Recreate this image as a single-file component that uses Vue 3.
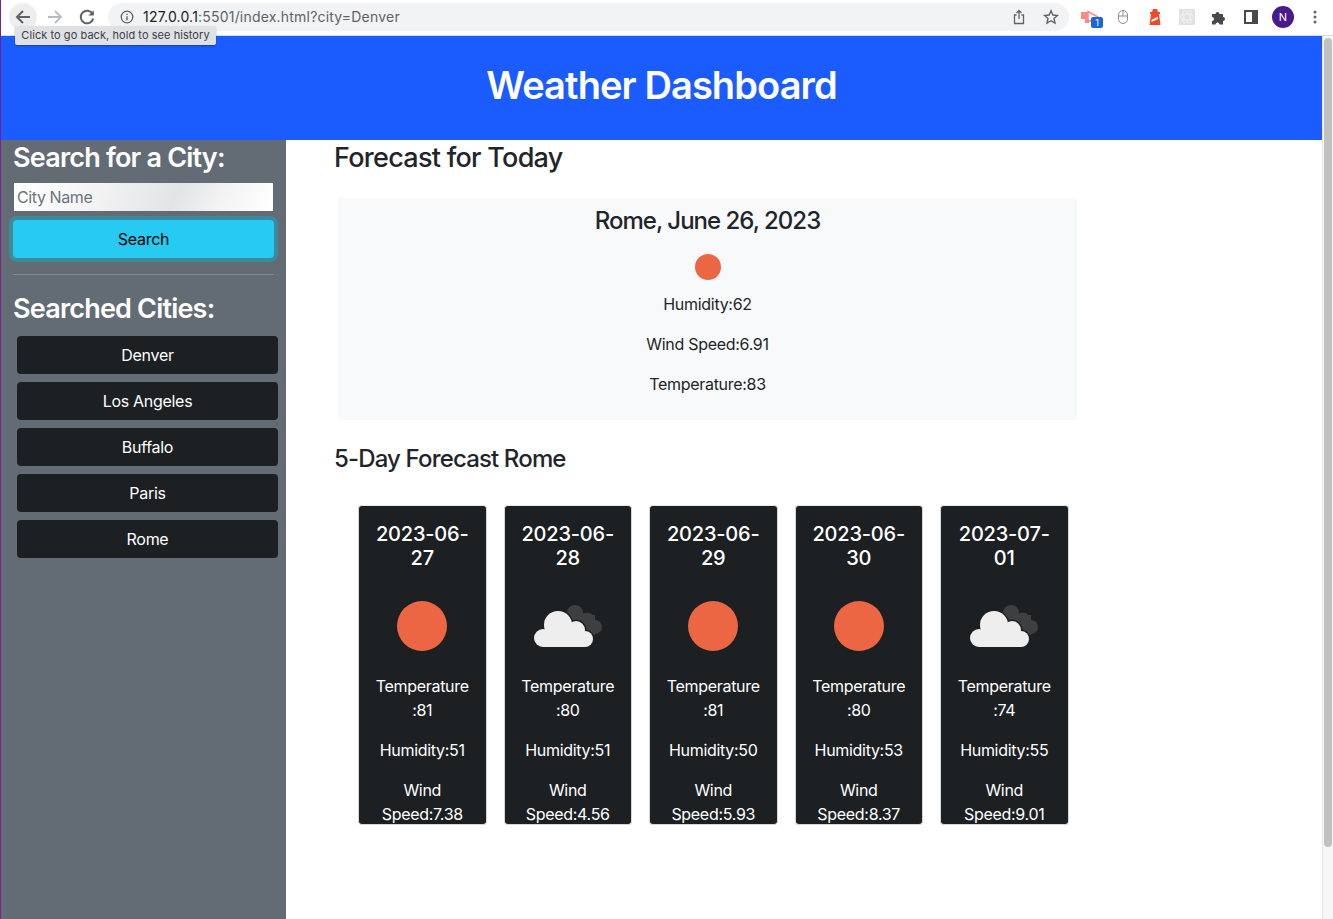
<script setup>
const cities = ['Denver', 'Los Angeles', 'Buffalo', 'Paris', 'Rome']
const days = [
  { date: '2023-06-27', icon: 'sun', temp: 81, hum: 51, wind: '7.38' },
  { date: '2023-06-28', icon: 'cloud', temp: 80, hum: 51, wind: '4.56' },
  { date: '2023-06-29', icon: 'sun', temp: 81, hum: 50, wind: '5.93' },
  { date: '2023-06-30', icon: 'sun', temp: 80, hum: 53, wind: '8.37' },
  { date: '2023-07-01', icon: 'cloud', temp: 74, hum: 55, wind: '9.01' },
]
</script>

<template>
  <div class="window">
    <div class="edge"></div>
    <div class="chrome">
      <div class="nav-btn back">
        <svg width="18" height="18" viewBox="0 0 18 18"><path d="M16 9H3.500M9 3 3 9l6 6" fill="none" stroke="#5f6368" stroke-width="2"/></svg>
      </div>
      <div class="nav-btn">
        <svg width="18" height="18" viewBox="0 0 18 18"><path d="M2 9h12.500M9 3l6 6-6 6" fill="none" stroke="#b9bbbe" stroke-width="1.800"/></svg>
      </div>
      <div class="nav-btn">
        <svg width="18" height="18" viewBox="0 0 18 18"><path d="M14.600 6A6.300 6.300 0 1 0 15.200 10.500" fill="none" stroke="#5f6368" stroke-width="2"/><path d="M15.800 2.200v5.400h-5.400z" fill="#5f6368"/></svg>
      </div>
      <div class="omnibox">
        <svg class="info" width="14" height="14" viewBox="0 0 14 14"><circle cx="7" cy="7" r="5.800" fill="none" stroke="#5f6368" stroke-width="1.300"/><path d="M7 6.200v4M7 3.700v1.300" stroke="#5f6368" stroke-width="1.400"/></svg>
        <span class="url"><b>127.0.0.1</b>:5501/index.html?city=Denver</span>
        <span class="spacer"></span>
        <svg width="16" height="16" viewBox="0 0 16 16"><path d="M5.500 6H3.500v8.500h9V6h-2M8 10V1.500M5.500 4 8 1.500 10.500 4" fill="none" stroke="#5f6368" stroke-width="1.300"/></svg>
        <svg class="star" width="16" height="16" viewBox="0 0 16 16"><path d="m8 1.800 1.900 4.200 4.500.5-3.400 3 1 4.500L8 11.700 4 14l1-4.500-3.400-3 4.500-.5z" fill="none" stroke="#5f6368" stroke-width="1.400"/></svg>
      </div>
      <div class="extensions">
        <div class="slot">
          <div class="ext-a">
            <svg width="20" height="18" viewBox="0 0 20 18"><path d="M7 3.500l10 5.500-10 5z" fill="none" stroke="#f98a8a" stroke-width="1.500"/><rect x="0" y="4" width="7" height="7" fill="#f98a8a"/><rect x="4" y="11" width="4" height="4" fill="#f98a8a"/></svg>
            <span class="badge">1</span>
          </div>
        </div>
        <div class="slot">
          <svg width="12" height="16" viewBox="0 0 12 16"><rect x="1.500" y="1.500" width="9" height="13" rx="4.500" fill="none" stroke="#8c8f93" stroke-width="1"/><path d="M1.500 7h9M6 1.500V7" stroke="#8c8f93" stroke-width="1"/></svg>
        </div>
        <div class="slot">
          <svg width="14" height="18" viewBox="0 0 14 18"><path d="M5 1h4l1 3h2v2h-1l1.500 11H1.500L3 6H2V4h2z" fill="#ef4a23"/><path d="M3.500 12 10 8.500V11l-6.500 3z" fill="#fff"/></svg>
        </div>
        <div class="slot">
          <div class="react">
            <svg width="16" height="16" viewBox="0 0 16 16"><g fill="none" stroke="#f4f4f4" stroke-width=".8"><ellipse cx="8" cy="8" rx="7" ry="3"/><ellipse cx="8" cy="8" rx="7" ry="3" transform="rotate(60 8 8)"/><ellipse cx="8" cy="8" rx="7" ry="3" transform="rotate(120 8 8)"/></g></svg>
          </div>
        </div>
        <div class="slot">
          <svg width="16" height="16" viewBox="0 0 16 16"><path d="M1 5h3.500a2 2 0 1 1 4 0H12v3a2 2 0 1 1 0 4v3.500H8.500a2 2 0 1 0-4 0H1V12a2 2 0 1 0 0-4z" fill="#46494d"/></svg>
        </div>
        <div class="slot">
          <svg width="14" height="14" viewBox="0 0 14 14"><rect x="1" y="1" width="12" height="12" fill="none" stroke="#46494d" stroke-width="2"/><rect x="8" y="1" width="5" height="12" fill="#46494d"/></svg>
        </div>
        <div class="slot"><div class="avatar">N</div></div>
        <div class="slot">
          <svg width="4" height="14" viewBox="0 0 4 14"><circle cx="2" cy="2" r="1.500" fill="#5f6368"/><circle cx="2" cy="7" r="1.500" fill="#5f6368"/><circle cx="2" cy="12" r="1.500" fill="#5f6368"/></svg>
        </div>
      </div>
    </div>
    <div class="tooltip">Click to go back, hold to see history</div>

    <div class="viewport">
      <div class="page">
        <header class="banner"><h1>Weather Dashboard</h1></header>
        <div class="content">
          <aside class="sidebar">
            <h2>Search for a City:</h2>
            <input class="city-input" type="text" placeholder="City Name" />
            <button class="search-btn">Search</button>
            <hr class="rule" />
            <h2 class="searched">Searched Cities:</h2>
            <div class="city-list">
              <button v-for="c in cities" :key="c" class="city-btn">{{ c }}</button>
            </div>
          </aside>
          <main class="main">
            <h2 class="today-title">Forecast for Today</h2>
            <section class="today">
              <h3>Rome, June 26, 2023</h3>
              <div class="sun small"></div>
              <p>Humidity:62</p>
              <p>Wind Speed:6.91</p>
              <p>Temperature:83</p>
            </section>
            <h3 class="five-title">5-Day Forecast Rome</h3>
            <div class="cards">
              <article v-for="d in days" :key="d.date" class="card">
                <h5>{{ d.date }}</h5>
                <div class="icon-box">
                  <div v-if="d.icon === 'sun'" class="sun big"></div>
                  <svg v-else width="70" height="46" viewBox="0 0 70 46">
                    <g fill="#3e3f41">
                      <circle cx="42" cy="10" r="8"/><circle cx="54" cy="17" r="7.500"/><circle cx="62" cy="24" r="7"/><rect x="42" y="12" width="20" height="20"/>
                    </g>
                    <g fill="#1c2023" stroke="#1c2023" stroke-width="3">
                      <circle cx="10" cy="35" r="9"/><circle cx="25" cy="22" r="14"/><circle cx="43" cy="27" r="9"/><circle cx="52" cy="36" r="8"/><rect x="10" y="28" width="42" height="16"/>
                    </g>
                    <g fill="#eeeeee">
                      <circle cx="10" cy="35" r="9"/><circle cx="25" cy="22" r="14"/><circle cx="43" cy="27" r="9"/><circle cx="52" cy="36" r="8"/><rect x="10" y="28" width="42" height="16"/>
                    </g>
                  </svg>
                </div>
                <p>Temperature :{{ d.temp }}</p>
                <p>Humidity:{{ d.hum }}</p>
                <p>Wind Speed:{{ d.wind }}</p>
              </article>
            </div>
          </main>
        </div>
      </div>
      <div class="scrollbar"><div class="thumb"></div></div>
    </div>
  </div>
</template>

<style scoped>
.window {
  position: relative;
  width: 1333px;
  height: 919px;
  overflow: hidden;
  display: flex;
  flex-direction: column;
  font-family: Inter, "Liberation Sans", sans-serif;
  color: #212529;
  background: #fff;
}
.edge {
  position: absolute;
  left: 0;
  top: 0;
  bottom: 0;
  width: 1px;
  background: #7b1f8e;
  z-index: 3;
}
.chrome {
  flex: none;
  height: 36px;
  box-sizing: border-box;
  border-bottom: 1px solid #d8dadd;
  display: flex;
  align-items: center;
  padding: 0 2px 2px 9px;
  background: #fff;
}
.nav-btn {
  width: 28px;
  height: 28px;
  margin-right: 4px;
  border-radius: 50%;
  display: flex;
  align-items: center;
  justify-content: center;
}
.back { background: #eeeeef; }
.omnibox {
  margin-left: 3px;
  width: 961px;
  height: 28px;
  border-radius: 14px;
  background: #f1f3f4;
  display: flex;
  align-items: center;
  padding: 0 10px 0 12px;
  box-sizing: border-box;
  font-size: 14px;
  letter-spacing: 0.2px;
  color: #5f6368;
}
.info { margin-right: 9px; }
.url b { color: #202124; font-weight: 400; }
.spacer { flex: 1; }
.star { margin-left: 16px; }
.extensions {
  display: flex;
  align-items: center;
  margin-left: 6px;
}
.slot {
  width: 32px;
  height: 24px;
  display: flex;
  align-items: center;
  justify-content: center;
}
.ext-a { position: relative; width: 20px; height: 18px; }
.badge {
  position: absolute;
  left: 10px;
  top: 9px;
  width: 12px;
  height: 11px;
  border-radius: 2px;
  background: #1a66d8;
  color: #fff;
  font-size: 9px;
  line-height: 11px;
  text-align: center;
}
.react {
  width: 16px;
  height: 16px;
  background: #e1e1e1;
  display: flex;
  align-items: center;
  justify-content: center;
}
.avatar {
  width: 22px;
  height: 22px;
  border-radius: 50%;
  background: #4a1a8c;
  color: #fff;
  font-size: 11px;
  line-height: 22px;
  text-align: center;
}
.tooltip {
  position: absolute;
  left: 15px;
  top: 26px;
  width: 201px;
  height: 19px;
  box-sizing: border-box;
  background: #dfe1e5;
  border-radius: 2px;
  box-shadow: 0 1px 2px rgba(0, 0, 0, 0.3);
  color: #3c4043;
  font-size: 11px;
  letter-spacing: 0.06px;
  line-height: 19px;
  text-align: center;
  z-index: 4;
}
.viewport { flex: 1; display: flex; min-height: 0; }
.page { flex: 1; min-width: 0; display: flex; flex-direction: column; padding-left: 1px; }
.banner {
  height: 104px;
  flex: none;
  box-sizing: border-box;
  padding-bottom: 6px;
  background: #1a5cff;
  display: flex;
  align-items: center;
  justify-content: center;
}
h1 {
  margin: 0;
  color: #fff;
  font-size: 38px;
  font-weight: 600;
  line-height: 46px;
  letter-spacing: -0.9px;
}
.content { flex: 1; display: flex; min-height: 0; }
.sidebar {
  width: 285px;
  flex: none;
  background: #636c74;
  padding: 0 12px;
  box-sizing: border-box;
  color: #fff;
}
h2 {
  margin: 0;
  font-size: 27px;
  font-weight: 500;
  line-height: 36px;
  letter-spacing: -0.72px;
}
.sidebar h2 {
  color: #fff;
  font-weight: 600;
  letter-spacing: -0.8px;
}
.city-input {
  display: block;
  width: 259px;
  height: 28px;
  margin: 7px 0 0 1px;
  padding: 0 3px;
  border: 0;
  box-sizing: border-box;
  font: 16px Inter, "Liberation Sans", sans-serif;
  letter-spacing: -0.4px;
  background: linear-gradient(115deg, #fff 0%, #f4f4f5 30%, #e3e4e5 62%, #f4f4f5 80%, #fff 100%);
  outline: none;
}
.city-input::placeholder { color: #6c757d; opacity: 1; }
.search-btn {
  display: block;
  width: 261px;
  height: 38px;
  margin-top: 9px;
  border: 0;
  border-radius: 4px;
  background: #27caf0;
  box-shadow: 0 0 0 4px #3d8aa0;
  color: #000;
  font: 16px Inter, "Liberation Sans", sans-serif;
  letter-spacing: -0.3px;
}
.rule {
  width: 261px;
  height: 1px;
  margin: 16px 0 0;
  border: 0;
  background: #84898f;
}
.searched { margin-top: 16px; }
.city-list {
  margin: 9px 0 0 4px;
  display: flex;
  flex-direction: column;
  gap: 8px;
}
.city-btn {
  width: 261px;
  height: 38px;
  border: 0;
  border-radius: 4px;
  background: #1c2023;
  color: #fff;
  font: 16px Inter, "Liberation Sans", sans-serif;
  letter-spacing: -0.3px;
}
.main { flex: 1; min-width: 0; padding-left: 48px; }
.today-title { color: #212529; }
.today {
  width: 739px;
  height: 222px;
  margin: 22px 0 0 4px;
  background: #f8f9fa;
  text-align: center;
  font-size: 16px;
  letter-spacing: -0.3px;
  overflow: hidden;
}
.today h3 {
  margin: 6px 0 0;
  font-size: 24px;
  font-weight: 500;
  line-height: 34px;
  letter-spacing: -1px;
}
.today p { margin: 0 0 16px; line-height: 24px; }
.sun { border-radius: 50%; background: #ec6644; }
.sun.small { width: 26px; height: 26px; margin: 16px auto 12px; }
.five-title {
  margin: 22px 0 0;
  font-size: 24px;
  font-weight: 500;
  line-height: 34px;
  letter-spacing: -0.85px;
}
.cards {
  display: flex;
  gap: 17px;
  margin: 29px 0 0 24px;
}
.card {
  width: 128.500px;
  height: 320px;
  box-sizing: border-box;
  border: 1px solid #d5d8db;
  border-top-color: #e3e5e7;
  border-radius: 4px;
  background: #1c2023;
  color: #fff;
  text-align: center;
  font-size: 16px;
  letter-spacing: -0.3px;
  padding: 16px 16px 0;
  overflow: hidden;
}
.card h5 {
  margin: 0 -2px;
  font-size: 20px;
  font-weight: 500;
  line-height: 24px;
  letter-spacing: -0.2px;
}
.icon-box {
  height: 50px;
  margin: 31px -16px 23px;
  display: flex;
  align-items: center;
  justify-content: center;
}
.sun.big { width: 50px; height: 50px; }
.card p { margin: 0 0 16px; line-height: 24px; }
.scrollbar {
  width: 11px;
  flex: none;
  background: #f7f7f7;
  border-left: 1px solid #e6e6e6;
  box-sizing: border-box;
  padding: 2px 1px;
}
.thumb { height: 809px; border-radius: 4px; background: #c1c1c1; }
</style>
